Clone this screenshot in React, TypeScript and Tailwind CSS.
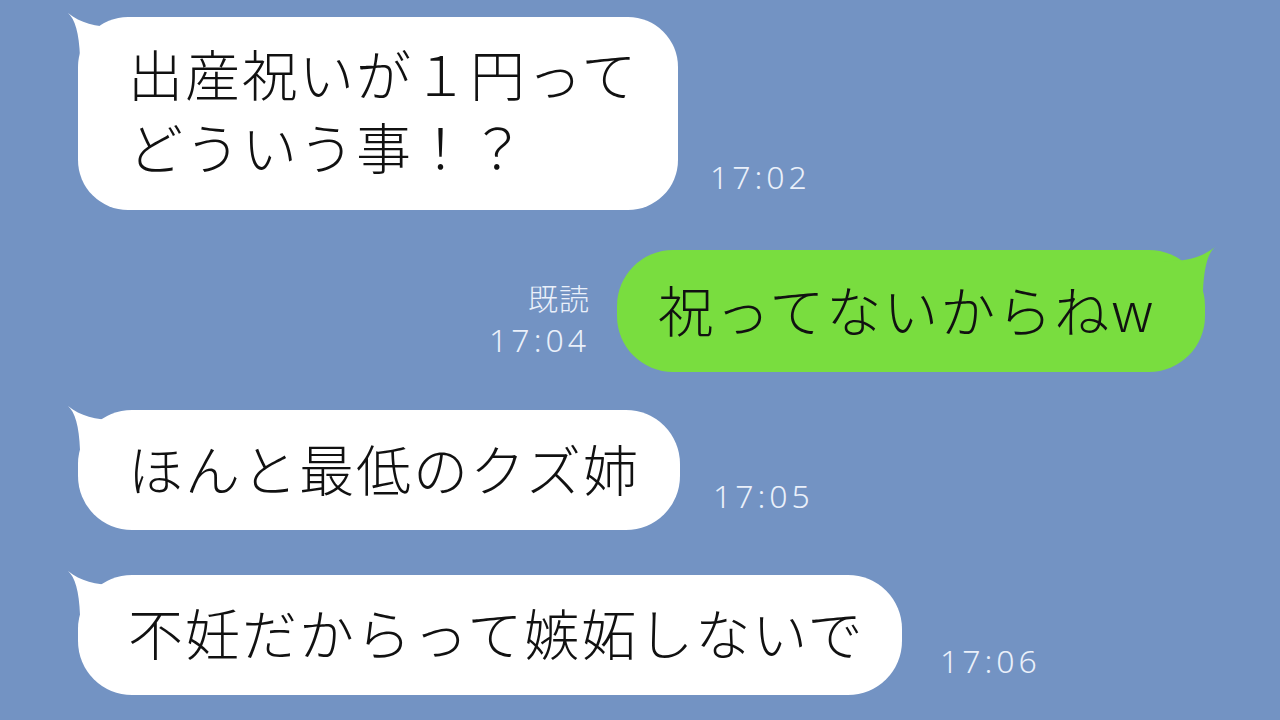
import React from 'react'

const jp = { fontFamily: '"Noto Sans CJK JP", "Noto Sans", sans-serif' }

function TailLeft() {
  return (
    <svg className="absolute left-[-12px] top-[-6px]" width="60" height="50" viewBox="0 0 60 50">
      <path d="M2,2 C9,8 13,22 14,46 L58,46 L58,16 C32,17 16,13 2,2 Z" fill="#ffffff" />
    </svg>
  )
}

function TailRight() {
  return (
    <svg className="absolute right-[-12px] top-[-5px]" width="60" height="50" viewBox="0 0 60 50">
      <path d="M58,2 C51,8 47,22 46,46 L2,46 L2,16 C28,17 44,13 58,2 Z" fill="#79dd3f" />
    </svg>
  )
}

function Time({ children }: { children: React.ReactNode }) {
  return (
    <div
      className="text-[32px] leading-[36px] font-light tracking-[4px] text-[#eaf0fa]"
      style={{ fontFamily: '"Noto Sans", "Open Sans", sans-serif' }}
    >
      {children}
    </div>
  )
}

const msg = 'relative text-[55px] leading-[73px] tracking-[2px] font-light text-[#111] whitespace-nowrap'

export default function App() {
  return (
    <div className="w-[1280px] h-[720px] overflow-hidden bg-[#7393c3] flex flex-col pt-[17px]" style={jp}>
      {/* 1 */}
      <div className="flex items-end pl-[78px]">
        <div className="relative w-[600px] h-[193px] bg-white rounded-[50px] pl-[50px] pt-[19px]">
          <TailLeft />
          <div className={msg}>
            出産祝いが１円って
            <br />
            どういう事！？
          </div>
        </div>
        <div className="ml-[32px] mb-[15px]">
          <Time>17:02</Time>
        </div>
      </div>

      {/* 2 */}
      <div className="flex items-end justify-end pr-[75px] mt-[40px]">
        <div className="mr-[27px] mb-[14px] flex flex-col items-end">
          <div className="text-[30px] leading-[34px] font-light tracking-[1px] text-[#eaf0fa] mb-[8px]">既読</div>
          <Time>17:04</Time>
        </div>
        <div className="relative w-[588px] h-[122px] bg-[#79dd3f] rounded-[56px] pl-[41px] pt-[22px]">
          <TailRight />
          <div className={msg}>祝ってないからねw</div>
        </div>
      </div>

      {/* 3 */}
      <div className="flex items-end pl-[78px] mt-[38px]">
        <div className="relative w-[602px] h-[120px] bg-white rounded-[54px] pl-[50px] pt-[21px]">
          <TailLeft />
          <div className={msg}>ほんと最低のクズ姉</div>
        </div>
        <div className="ml-[33px] mb-[16px]">
          <Time>17:05</Time>
        </div>
      </div>

      {/* 4 */}
      <div className="flex items-end pl-[78px] mt-[45px]">
        <div className="relative w-[824px] h-[120px] bg-white rounded-[54px] pl-[50px] pt-[20px]">
          <TailLeft />
          <div className={msg}>不妊だからって嫉妬しないで</div>
        </div>
        <div className="ml-[38px] mb-[16px]">
          <Time>17:06</Time>
        </div>
      </div>
    </div>
  )
}
